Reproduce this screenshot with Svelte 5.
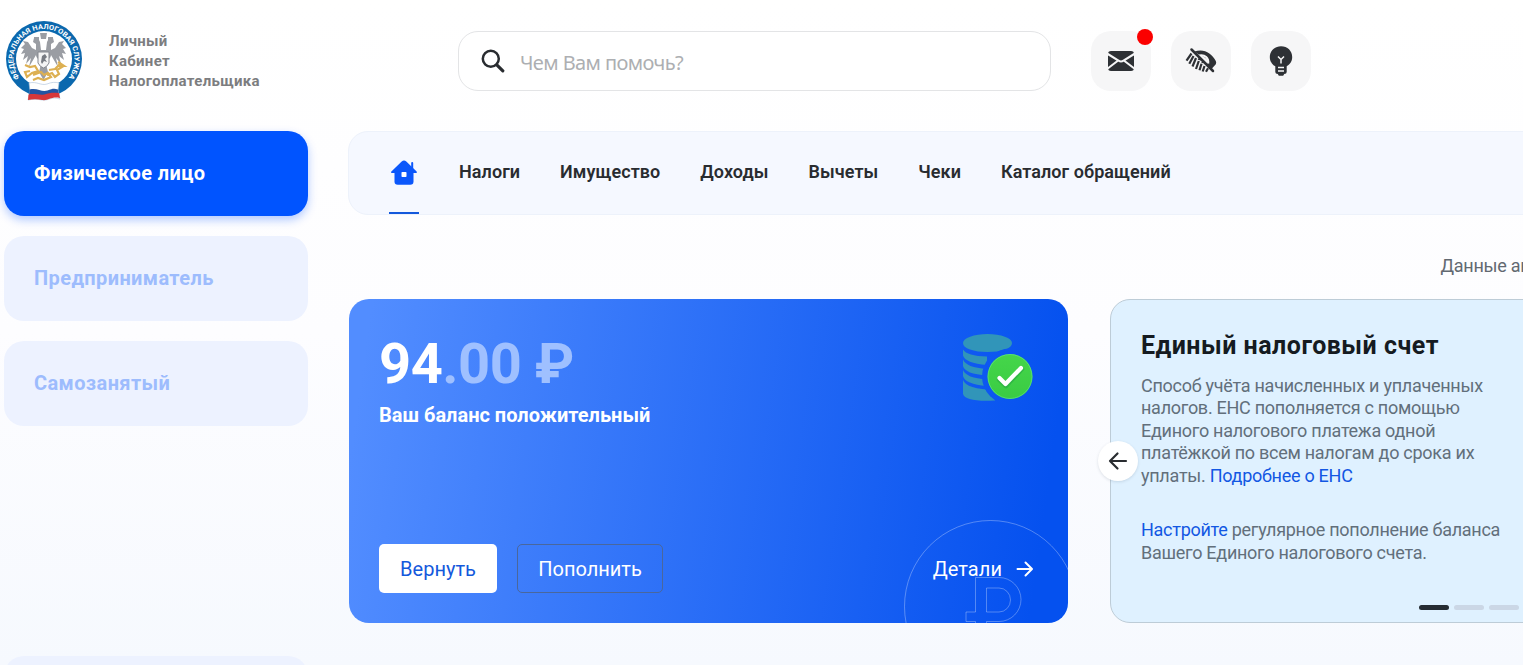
<script>
  const roles = ['Физическое лицо', 'Предприниматель', 'Самозанятый'];
  const sections = ['Налоги', 'Имущество', 'Доходы', 'Вычеты', 'Чеки', 'Каталог обращений'];
</script>

<div class="page">
  <header>
    <div class="brand">
      <svg class="emblem" width="78" height="82" viewBox="0 0 78 82">
        <defs><path id="ring" d="M14.500 57.800A30.500 30.500 0 1 1 63.500 57.800" /></defs>
        <circle cx="39" cy="39" r="38" fill="#0b68ae" />
        <circle cx="39" cy="39" r="28" fill="#fff" />
        <text class="ringtext" fill="#fff"><textPath href="#ring" textLength="134" lengthAdjust="spacingAndGlyphs">ФЕДЕРАЛЬНАЯ НАЛОГОВАЯ СЛУЖБА</textPath></text>
        <g fill="#9a9da3">
          <path d="M37 40C34 40 31 38 31 35L24 47 26 38 21 44 23 36 18 40 20 33 16 34 19 29 16 28 20 24 18 21 23 22 27 28 31 30 31 24 28 22 29 18 33 18 35 22 36 30H41L42 22 44 18 48 18 49 22 46 24 46 30 50 28 54 22 59 21 57 24 61 28 58 29 61 34 57 33 59 40 54 36 56 44 51 38 53 47 46 35C46 38 43 40 40 40L43 52 38.500 60 34 52Z" />
          <path d="M35 13h7l-1 6h-5zM29 17h5v3h-5zM43 17h5v3h-5z" />
        </g>
        <path d="M33 32h11v11q-2 4-5.500 5-3.500-1-5.500-5z" fill="#f4f4f4" stroke="#85888f" stroke-width="1" />
        <path d="M36 42l1-6 3-2 2 3-2 2 2 3-3-1-2 3z" fill="#777b82" />
        <path d="M20 45l5 2 5-1 3 5-6 2-5 4-2-5 5-1M44 50l6-1 4-4 3 2-5 3 2 4-4 3-3-4-5 2M28 55l8-3 3 3 4-2 3 4-7 3-6-2-5 2M53 42l6 4-7 0" fill="none" stroke="#ddb052" stroke-width="2.200" />
        <path d="M24 63c8-2 12 3 18 1 5-2 8-2 12-1l-1 7 2 9c-9-3-11 2-18 1-5-1-9-1-14 0l2-9z" fill="#fff" stroke="#a9bfd8" stroke-width=".6" />
        <path d="M24.500 69.500c8-2 12 3 18 1 5-2 7-2 10.500-1l1 5c-8-2-11 3-17 2-5-1-9-1-13 0z" fill="#2455a3" />
        <path d="M23.500 74.500c6-1.500 10 1 16 0 5-2 9-2 14.500-1.500l1 5c-9-2-11 3-18 2-5-1-9-1-14 0z" fill="#d8373a" />
      </svg>
      <p>Личный<br />Кабинет<br />Налогоплательщика</p>
    </div>
    <div class="search">
      <svg width="24" height="24" viewBox="0 0 24 24" fill="none" stroke="#292c30"><circle cx="9.800" cy="9.800" r="8" stroke-width="2.500" /><path d="M15.800 15.800l6 6" stroke-width="3.200" stroke-linecap="round" /></svg>
      <span>Чем Вам помочь?</span>
    </div>
    <div class="tools">
      <button aria-label="Сообщения">
        <svg width="60" height="60" viewBox="0 0 60 60"><rect x="17" y="20" width="26" height="20" rx="3" fill="#2e3135" /><path d="M16 22.500l11.500 7.200q2.500 1.600 5 0L44 22.500M16 38l10.500-8M44 38l-10.500-8" fill="none" stroke="#f6f6f7" stroke-width="2.100" /></svg>
        <i class="dot"></i>
      </button>
      <button aria-label="Версия для слабовидящих">
        <svg width="60" height="60" viewBox="0 0 60 60" fill="none">
          <path d="M23.500 20.500c9.500-3.200 17 1.500 21.300 9.500q.8 1.600 0 3.200l-4.300 4.800-4-3.500q1.500-8.500-8-10.500z" fill="#2e3135" />
          <path d="M28 24.500c6-1.500 10 3 9.200 8" stroke="#f6f6f7" stroke-width="2" />
          <g stroke="#2e3135" stroke-width="2.200"><path d="M20.500 22.500l-5 7.200M22.500 25l-4.200 7.800M25 27l-3.500 8.500M27.800 30l-2.800 8M30.500 32.800l-2 6.500M33.500 35l-1.800 5.500M37 37.200l-2 3.500" /></g>
          <path d="M27 28l4 1M30.500 31.500l3-.5" stroke="#2e3135" stroke-width="1.500" />
          <path d="M20.500 18.500l21.500 21.500" stroke="#2e3135" stroke-width="2.500" stroke-linecap="round" />
        </svg>
      </button>
      <button aria-label="Подсказки">
        <svg width="60" height="60" viewBox="0 0 60 60"><path d="M30 15.200c-6.500 0-11.200 4.700-11.200 10.800 0 4.600 2.500 7.600 5.500 9.300V41q0 2 2.500 2l1 1.700h4.400L33.200 43q2.500 0 2.500-2v-5.700c3-1.700 5.500-4.700 5.500-9.300 0-6.100-4.700-10.800-11.200-10.800z" fill="#2e3135" /><path d="M27 25.500l3 3 3-3M30 28.500v4M27 36.500h6M27 40h6" fill="none" stroke="#f6f6f7" stroke-width="1.500" /></svg>
      </button>
    </div>
  </header>

  <div class="body">
    <aside>
      {#each roles as role, i}
        <button class="role" class:active={i === 0}>{role}</button>
      {/each}
      <div class="more"></div>
    </aside>
    <main>
      <nav>
        <a class="home" href="#home" aria-label="Главная">
          <svg width="28" height="27" viewBox="0 0 28 27"><path d="M4.500 12.500L14 4l9.500 8.500v10q0 3.300-3.300 3.300H7.800q-3.300 0-3.300-3.300z" fill="#0b57fb" /><path d="M2 13.200L12.300 3.200q1.700-1.600 3.400 0L26 13.200z" fill="#0b57fb" stroke="#0b57fb" stroke-width="1.800" stroke-linejoin="round" /><path d="M22.200 4v6" stroke="#0b57fb" stroke-width="2" stroke-linecap="round" /><rect x="11.500" y="13" width="5" height="5" rx=".8" fill="#fff" /></svg>
        </a>
        {#each sections as name}<a href="#section">{name}</a>{/each}
      </nav>
      <div class="actual">Данные актуальны</div>
      <div class="cards">
        <section class="balance">
          <svg class="mark" width="180" height="104" viewBox="0 0 180 104" fill="none" stroke="#fff" stroke-opacity=".3"><circle cx="102.500" cy="86.500" r="86" /><path d="M87.500 110V101.500H78V92h9.500V57.500H111a22 22 0 0 1 0 44H98.500V110M98.500 68H111a11.500 12 0 0 1 0 24H98.500z" /></svg>
          <div class="top">
            <div>
              <div class="sum">94<span>.00 ₽</span></div>
              <div class="status">Ваш баланс положительный</div>
            </div>
            <svg class="coins" width="72" height="70" viewBox="0 0 72 70">
              <defs>
                <mask id="cut"><rect width="72" height="70" fill="#fff" /><circle cx="48" cy="43.500" r="28" fill="#000" /></mask>
                <linearGradient id="green" x2="0" y2="1"><stop stop-color="#45d64a" /><stop offset="1" stop-color="#3acb43" /></linearGradient>
              </defs>
              <g fill="#3195b9" mask="url(#cut)">
                <path d="M1 10a24.500 9 0 0 1 49 0q0 4-7 6.500-7 2.500-17.500 2.500T8 16.500q-7-2.500-7-6.500z" />
                <path d="M1 16.500q4 6.500 24 7v8.500Q3 30 1 22.500zM1 26.500q3 8 24 9.500v6.500Q3 41 1 33zM1 37q3 8 24 9.500v6.500Q3 51 1 43zM1 47q3 9 32 10v10.500Q3 69 1 61z" />
              </g>
              <circle cx="48" cy="43.500" r="22.500" fill="url(#green)" /><circle cx="48" cy="43.500" r="22" fill="none" stroke="#6bf299" stroke-opacity=".5" />
              <path d="M37 46.500l7 6.500 16-17" fill="none" stroke="#178e42" stroke-opacity=".35" stroke-width="4.500" stroke-linecap="round" stroke-linejoin="round" />
              <path d="M37.500 45l6 6 15.500-16" fill="none" stroke="#fff" stroke-width="4.200" stroke-linecap="round" stroke-linejoin="round" />
            </svg>
          </div>
          <div class="bottom">
            <button class="refund">Вернуть</button>
            <button class="topup">Пополнить</button>
            <a class="details" href="#details">Детали <svg width="18" height="16" viewBox="0 0 18 16" fill="none" stroke="#fff" stroke-width="2" stroke-linecap="round" stroke-linejoin="round"><path d="M1.500 8h14M9.500 1.500L16 8l-6.500 6.500" /></svg></a>
          </div>
        </section>
        <section class="slide">
          <h2>Единый налоговый счет</h2>
          <p>Способ учёта начисленных и уплаченных<br />налогов. ЕНС пополняется с помощью<br />Единого налогового платежа одной<br />платёжкой по всем налогам до срока их<br />уплаты. <a href="#ens">Подробнее о ЕНС</a></p>
          <p class="second"><a href="#setup">Настройте</a> регулярное пополнение баланса<br />Вашего Единого налогового счета.</p>
          <div class="pager"><i class="on"></i><i></i><i></i></div>
          <button class="prev" aria-label="Назад"><svg width="20" height="20" viewBox="0 0 20 20" fill="none" stroke="#292c30" stroke-width="2.200" stroke-linecap="round" stroke-linejoin="round"><path d="M18 10H2M9.500 2.500L2 10l7.500 7.500" /></svg></button>
        </section>
      </div>
    </main>
  </div>
</div>

<style>
  :global(body) { overflow: hidden; }
  .page { box-sizing: border-box; width: 1523px; height: 665px; overflow: hidden; font-family: Roboto, "Liberation Sans", sans-serif; color: #292c30; background: linear-gradient(#fff, #fdfdff 50%, #f6f9fe); }
  button { font: inherit; border: 0; padding: 0; margin: 0; }
  a { text-decoration: none; color: inherit; }
  svg { display: block; flex: none; }
  header { display: flex; height: 131px; box-sizing: border-box; padding: 20px 0 0 5px; }
  .brand { display: flex; width: 453px; gap: 26px; }
  .brand p { margin: 11px 0 0; font-size: 15px; line-height: 20px; font-weight: 700; color: #7c7d80; letter-spacing: .3px; }
  .ringtext { font: 700 7px Roboto, sans-serif; }
  .search { box-sizing: border-box; margin-top: 11px; width: 593px; height: 60px; border: 1px solid #e3e4e6; border-radius: 20px; background: #fff; display: flex; align-items: center; padding-left: 22px; gap: 15px; }
  .search span { font: 20px/30px "Noto Sans", sans-serif; letter-spacing: -.6px; color: #adafb2; margin-top: 3px; }
  .tools { display: flex; gap: 20px; margin: 11px 0 0 40px; }
  .tools button { position: relative; width: 60px; height: 60px; border-radius: 20px; background: #f6f6f7; }
  .dot { position: absolute; width: 16px; height: 16px; border-radius: 50%; background: #fb0000; right: -2px; top: -2px; }
  .body { display: flex; gap: 40px; padding-left: 4px; }
  aside { flex: none; width: 304px; display: flex; flex-direction: column; gap: 20px; }
  .role { height: 85px; border-radius: 20px; text-align: left; padding: 0 0 2px 30px; font-size: 20px; font-weight: 700; letter-spacing: .4px; color: #9dbcfd; background: #edf2ff; }
  .role.active { background: #0054ff; color: #fff; box-shadow: 0 4px 10px rgba(0, 84, 255, .3); }
  .more { margin-top: 210px; height: 85px; border-radius: 20px; background: #edf2ff; }
  main { flex: none; width: 1240px; }
  nav { display: flex; align-items: stretch; box-sizing: border-box; height: 84px; border: 1px solid #edf2fb; border-radius: 20px; background: #f5f8ff; padding-left: 40px; gap: 40px; font-size: 18px; font-weight: 600; line-height: 80px; letter-spacing: .07px; white-space: nowrap; }
  .home { width: 30px; box-sizing: border-box; border-bottom: 2px solid #1459dc; display: flex; justify-content: center; padding-top: 27px; }
  .actual { margin: 39px 0 0 1092.500px; height: 24px; font-size: 18px; line-height: 24px; letter-spacing: -.27px; color: #626971; white-space: nowrap; }
  .cards { display: flex; gap: 42px; margin: 21px 0 0 1px; }
  .balance { position: relative; flex: none; box-sizing: border-box; width: 719px; height: 324px; border-radius: 20px; overflow: hidden; padding: 30px; display: flex; flex-direction: column; justify-content: space-between; color: #fff; background: linear-gradient(98deg, #528dff 3%, #0551ef 95%); }
  .mark { position: absolute; right: 0; bottom: -1px; }
  .top { display: flex; justify-content: space-between; }
  .sum { font-size: 56px; font-weight: 700; line-height: 71px; letter-spacing: -.5px; white-space: nowrap; }
  .sum span { color: #9fc0ff; }
  .status { font-size: 20px; line-height: 24px; font-weight: 700; margin-top: 3px; }
  .coins { margin: 4px 4px 0 0; }
  .bottom { position: relative; display: flex; align-items: center; font-size: 20px; }
  .refund, .topup { box-sizing: border-box; height: 49px; border-radius: 5px; }
  .refund { width: 118px; background: #fff; color: #1459dc; }
  .topup { width: 146px; margin-left: 20px; background: transparent; color: #fff; border: 1px solid #4a679c; }
  .details { margin-left: auto; margin-right: 4px; display: flex; align-items: center; gap: 14px; letter-spacing: .05px; }
  .slide { position: relative; flex: none; box-sizing: border-box; width: 480px; height: 324px; border: 1px solid #bdccd7; border-radius: 20px; background: #dff1ff; padding: 30px 0 0 30px; }
  h2 { margin: 0; font-size: 25px; line-height: 32px; font-weight: 700; letter-spacing: .5px; color: #151b21; }
  .slide p { margin: 12.900px 0 0; font-size: 18px; line-height: 22.500px; letter-spacing: -.27px; color: #626f7b; white-space: nowrap; }
  .slide p.second { margin-top: 32px; }
  .slide a { color: #1257e3; }
  .pager { display: flex; gap: 5px; margin: 41px 0 0 278px; }
  .pager i { width: 30px; height: 5px; border-radius: 3px; background: #cbd7e6; }
  .pager .on { background: #252c33; }
  .prev { position: absolute; left: -13px; top: 141px; width: 40px; height: 40px; border-radius: 50%; background: #fff; box-shadow: 0 1px 3px rgba(40, 60, 80, .15); display: flex; align-items: center; justify-content: center; }
</style>
